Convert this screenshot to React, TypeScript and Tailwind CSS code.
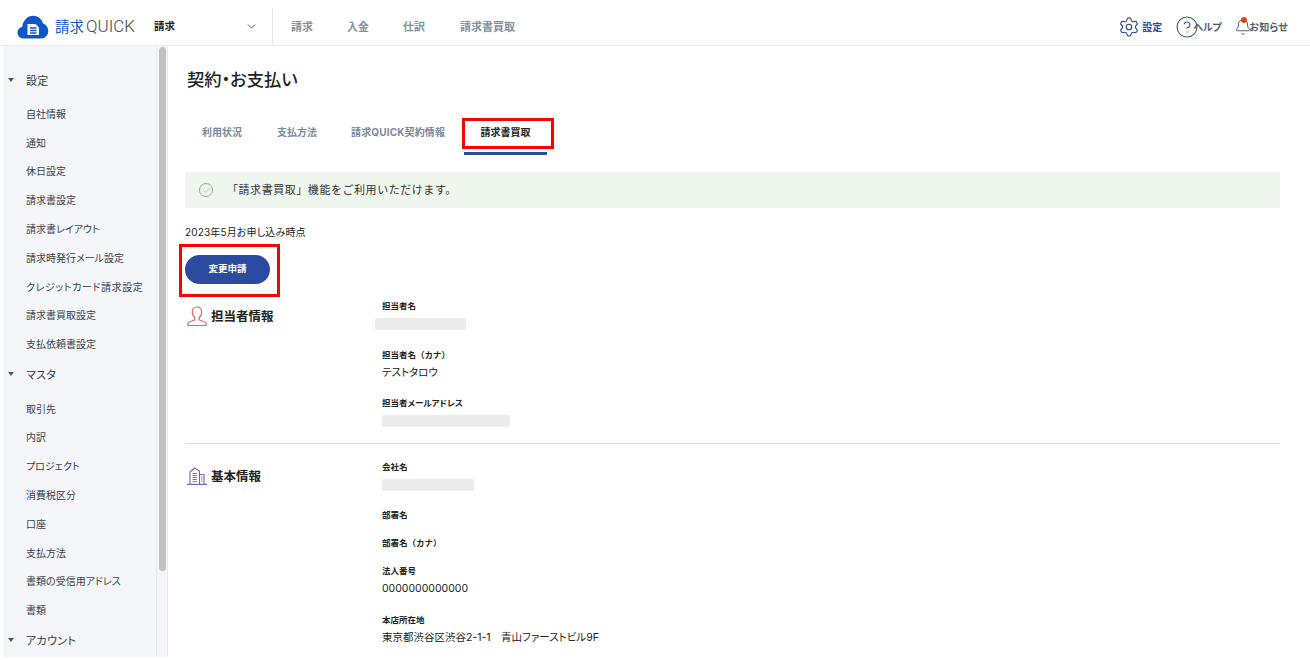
import { Check, ChevronDown, CircleHelp, Bell, Settings } from "lucide-react";

const FONT = "[font-family:Inter,'Noto_Sans_CJK_JP',sans-serif] [font-feature-settings:'palt']";

const sections = [
  {
    title: "設定",
    items: ["自社情報", "通知", "休日設定", "請求書設定", "請求書レイアウト", "請求時発行メール設定", "クレジットカード請求設定", "請求書買取設定", "支払依頼書設定"],
  },
  {
    title: "マスタ",
    items: ["取引先", "内訳", "プロジェクト", "消費税区分", "口座", "支払方法", "書類の受信用アドレス", "書類"],
  },
  { title: "アカウント", items: [] },
];

function Logo() {
  return (
    <svg width="32" height="24" viewBox="0 0 32 24" className="shrink-0">
      <path
        d="M7 23.500C3 23.500.5 20.800.5 17.500c0-3 2-5.300 4.800-5.800C6 5.500 10.500.8 16 .8c4.800 0 8.800 3.200 10 7.700 3 1 5.300 4 5.300 7.500 0 4.200-3.300 7.500-7.300 7.500Z"
        fill="#0f56c9"
      />
      <path d="M10.500 9h8l3.500 3.500V20H10.500Z" fill="#fff" />
      <path d="M13 13h6.500M13 15.500h6.500M13 18h6.500" stroke="#0f56c9" strokeWidth="1.300" />
    </svg>
  );
}

function PersonIcon() {
  return (
    <svg width="20" height="21" viewBox="0 0 20 21" fill="none" stroke="#d96a6a" strokeWidth="1.200" className="shrink-0">
      <path d="M10 1c-3 0-4.700 2.300-4.700 5 0 2.400 1 4.500 2.500 5.600v2.200c-1.500 1-6.200 1.700-7 3.700v2h18.400v-2c-.8-2-5.500-2.700-7-3.700v-2.200c1.500-1.100 2.500-3.200 2.500-5.600 0-2.700-1.700-5-4.700-5Z" />
    </svg>
  );
}

function BuildingIcon() {
  return (
    <svg width="20" height="18" viewBox="0 0 20 18" fill="none" stroke="#7a62ad" strokeWidth="1.100" className="shrink-0">
      <path d="M0 17.500h20" strokeWidth="1.400" />
      <path d="M3 17V5l4.500-4 5 3v13M12.500 7.500H17V17" />
      <path d="M5.500 6.500h4.500M5.500 8.500h4.500M5.500 10.500h4.500M5.500 12.500h4.500M5.500 14.500h4.500M14 10h1.500M14 12h1.500M14 14h1.500" strokeWidth=".9" />
    </svg>
  );
}

function Header() {
  return (
    <header className="flex h-[46px] items-stretch border-b border-[#ececef] bg-white">
      <div className="flex w-[154px] items-center pl-[17px] pt-[8px]">
        <Logo />
        <span className="ml-[6px] whitespace-nowrap text-[14.500px] leading-none text-[#0f56c9]">
          請求<span className="ml-[2px] text-[17px] font-light text-[#3d4650] [font-family:Roboto,sans-serif]">QUICK</span>
        </span>
      </div>
      <div className="mt-[8px] flex w-[119px] items-center justify-between border-r border-[#e3e5e8] pr-[14px] pt-[1px] pb-[1px]">
        <span className="text-[10.500px] font-bold text-[#222]">請求</span>
        <ChevronDown size={13} className="text-[#4b5a69]" strokeWidth={1.800} />
      </div>
      <nav className="ml-[18px] flex items-center pt-[10px] text-[11px] font-bold text-[#84919c]">
        <span className="w-[56px]">請求</span>
        <span className="w-[56px]">入金</span>
        <span className="w-[57px]">仕訳</span>
        <span>請求書買取</span>
      </nav>
      <div className="ml-auto flex items-center pt-[9px] pr-[22px] text-[10px] font-bold text-[#55606c]">
        <Settings size={22} strokeWidth={1.300} className="text-[#2a4ba0]" />
        <span className="ml-[2px] text-[#2a4ba0]">設定</span>
        <CircleHelp size={24} strokeWidth={1.100} className="ml-[13px] text-[#4b5a69]" />
        <span className="-ml-[6px] tracking-[-0.3px]">ヘルプ</span>
        <span className="relative ml-[13px]">
          <Bell size={18} strokeWidth={1.300} className="text-[#4b5a69]" />
          <span className="absolute left-[7px] -top-[1px] h-[6px] w-[6px] rounded-full bg-[#d9481c]" />
        </span>
        <span className="-ml-[3px] tracking-[0.3px]">お知らせ</span>
      </div>
    </header>
  );
}

function Sidebar() {
  return (
    <aside className="ml-[3px] flex w-[165px] shrink-0 border-r border-[#e8e9ee] bg-[#f5f6fa]">
      <div className="w-[154px] shrink-0 overflow-hidden border-r border-[#e8e9ee] pt-[18.500px]">
        {sections.map((section) => (
          <div key={section.title}>
            <div className="mb-[2.500px] flex h-[33px] items-center text-[11px] text-[#333a42]">
              <span className="ml-[5px] mb-[3px] h-0 w-0 border-x-[3px] border-t-[4px] border-x-transparent border-t-[#4a5866]" />
              <span className="ml-[12px] tracking-[0.3px]">{section.title}</span>
            </div>
            {section.items.map((item) => (
              <div
                key={item}
                className={`flex h-[28.800px] items-center whitespace-nowrap pl-[23px] text-[10px] text-[#3a4149] ${
                  item.startsWith("クレジット") ? "tracking-[0.6px]" : ""
                }`}
              >
                {item}
              </div>
            ))}
          </div>
        ))}
      </div>
      <div className="pl-[2px] pt-[1px]">
        <div className="h-[524px] w-[7px] rounded-full bg-[#c1c1c1]" />
      </div>
    </aside>
  );
}

function Tabs() {
  return (
    <div className="mt-[25px] flex h-[32px] items-start pl-[34px] text-[10px] font-bold text-[#7b8a98]">
      <span className="w-[75px] pt-[7px]">利用状況</span>
      <span className="w-[74px] pt-[7px]">支払方法</span>
      <span className="w-[113px] pt-[7px] tracking-[0.15px]">請求QUICK契約情報</span>
      <span className="relative flex h-[37px] w-[83px] justify-center border-b-[3px] border-[#2a4ba0] pt-[7px] text-[#222]">
        請求書買取
        <span className="absolute -left-[2px] top-0 h-[31px] w-[92px] border-[3px] border-[#ff0000]" />
      </span>
    </div>
  );
}

function Field({ label, value, blank, offset }: { label: string; value?: string; blank?: number; offset?: boolean }) {
  return (
    <div className="h-[28px] text-[#222]">
      <div className={`text-[8.500px] font-bold leading-[14px] ${label.includes("（") ? "[font-feature-settings:normal]" : ""}`}>
        {label}
      </div>
      {value && <div className="mt-[4px] whitespace-nowrap text-[10.500px] leading-[14px]">{value}</div>}
      {blank && (
        <div
          className={`mt-[5px] h-[12px] rounded-[2px] bg-[#ebebeb] ${offset ? "-ml-[7px]" : ""}`}
          style={{ width: blank }}
        />
      )}
    </div>
  );
}

export default function App() {
  return (
    <div className={`flex h-[660px] w-[1310px] flex-col overflow-hidden bg-white ${FONT}`}>
      <Header />
      <div className="flex h-[611px] min-h-0">
        <Sidebar />
        <main className="min-w-0 flex-1">
          <h1 className="mt-[21px] pl-[19px] text-[17.300px] font-medium leading-[26px] text-[#222]">契約・お支払い</h1>
          <Tabs />
          <div className="pl-[17px] pr-[30px]">
            <div className="mt-[22px] flex h-[36px] items-center rounded-[2px] bg-[#eef6ee] pl-[14px] text-[11px] text-[#333]">
              <span className="flex h-[14px] w-[14px] items-center justify-center rounded-full border border-[#7cbf6e]">
                <Check size={9} strokeWidth={1.500} className="text-[#7cbf6e]" />
              </span>
              <span className="ml-[14px] tracking-[0.55px] [font-feature-settings:normal]">「請求書買取」機能をご利用いただけます。</span>
            </div>
            <p className="mt-[17px] text-[10px] leading-[14px] tracking-[0.15px] text-[#222]">2023年5月お申し込み時点</p>
            <div className="relative mt-[16px] h-[29px] w-[85px]">
              <button className="flex h-[29px] w-[85px] items-center justify-center rounded-full bg-[#2a4ba0] text-[9.500px] font-bold text-white">
                変更申請
              </button>
              <span className="absolute -left-[6px] -top-[11px] h-[53px] w-[101px] border-[3px] border-[#ff0000]" />
            </div>
            <section className="mt-[15px] flex h-[145px] border-b border-[#dcdee1]">
              <div className="flex h-[24px] w-[197px] items-start gap-[4px] pl-[2px] pt-[7px]">
                <PersonIcon />
                <h2 className="pt-[1px] text-[12.500px] font-bold leading-[20px] text-[#222]">担当者情報</h2>
              </div>
              <div className="flex flex-col">
                <Field label="担当者名" blank={91} offset />
                <div className="h-[20.500px]" />
                <Field label="担当者名（カナ）" value="テストタロウ" />
                <div className="h-[20.500px]" />
                <Field label="担当者メールアドレス" blank={128} />
              </div>
            </section>
            <section className="mt-[16px] flex">
              <div className="flex w-[197px] items-start gap-[4px] pl-[2px] pt-[7px]">
                <BuildingIcon />
                <h2 className="pt-[1px] text-[12.500px] font-bold leading-[18px] text-[#222]">基本情報</h2>
              </div>
              <div className="flex flex-col">
                <Field label="会社名" blank={92} />
                <div className="h-[20px]" />
                <Field label="部署名" />
                <Field label="部署名（カナ）" />
                <Field label="法人番号" value="0000000000000" />
                <div className="h-[21px]" />
                <Field label="本店所在地" value="東京都渋谷区渋谷2-1-1　青山ファーストビル9F" />
              </div>
            </section>
          </div>
        </main>
      </div>
    </div>
  );
}
